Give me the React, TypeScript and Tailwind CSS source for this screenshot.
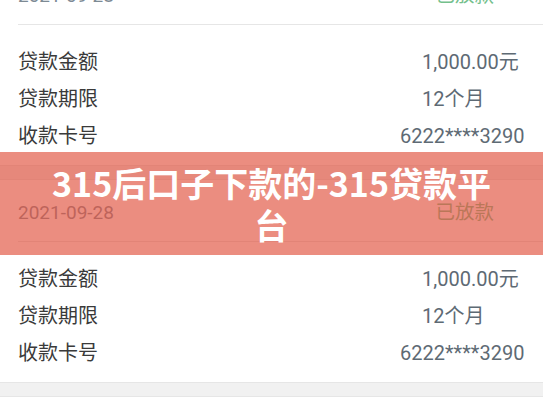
import React from "react";

const rows = [
  { label: "贷款金额", value: "1,000.00元", pad: true },
  { label: "贷款期限", value: "12个月", pad: true },
  { label: "收款卡号", value: "6222****3290", pad: false },
];

function Card() {
  return (
    <div className="bg-white">
      <div className="h-[61px] pt-[5px] pl-[18px] pr-[49px] flex items-center justify-between">
        <span className="text-[19px] text-[#7d8a94]">2021-09-28</span>
        <span className="text-[19.5px] text-[#74c08c]">已放款</span>
      </div>
      <div className="ml-[18px] h-px bg-[#e6e6e6]" />
      <div className="pt-[18px] pb-[11px]">
        {rows.map((r) => (
          <div key={r.label} className="h-[37px] flex items-center justify-between pl-[18px] pr-[21px]">
            <span className="text-[20px] text-[#3a3a3a]">{r.label}</span>
            <span
              className={`w-[122px] text-[20px] text-[#5e6a74] whitespace-nowrap ${r.pad ? "pl-[22px]" : "text-right"}`}
            >
              {r.value}
            </span>
          </div>
        ))}
      </div>
    </div>
  );
}

export default function App() {
  return (
    <div
      className="relative w-[543px] h-[408px] overflow-hidden bg-white"
      style={{ fontFamily: "Roboto, 'Noto Sans CJK SC', sans-serif" }}
    >
      <div className="-mt-[37px]">
        <Card />
        <div className="h-[15px] bg-[#f1f1f1] border-y border-[#e6e6e6]" />
        <Card />
        <div className="h-[15px] bg-[#f1f1f1] border-y border-[#e6e6e6]" />
        <Card />
      </div>
      <div className="absolute left-0 right-0 top-[152px] h-[103px] bg-[rgba(225,80,60,0.65)] flex items-center justify-center">
        <h1
          className="w-[452px] text-center text-white font-bold text-[34px] leading-[42px]"
          style={{ fontFamily: "'Noto Sans CJK SC', sans-serif" }}
        >
          315后口子下款的-315贷款平台
        </h1>
      </div>
    </div>
  );
}
